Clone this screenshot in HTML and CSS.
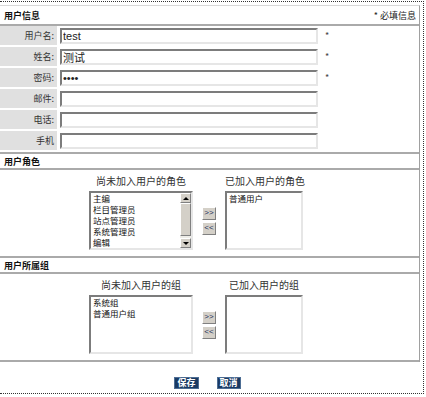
FILE: index.html
```html
<!DOCTYPE html>
<html>
<head>
  <meta charset="utf-8">
  <link rel="stylesheet" href="styles.css">
</head>
<body>
  <div class="frame">
    <div class="panel">
      <div class="sec-head first"><span>用户信息</span><span class="req">* 必填信息</span></div>
      <div class="fields">
        <div class="row"><div class="lab">用户名:</div><div class="val"><input class="txt" type="text" value="test"><span class="star">*</span></div></div>
        <div class="row"><div class="lab">姓名:</div><div class="val"><input class="txt" type="text" value="测试"><span class="star">*</span></div></div>
        <div class="row"><div class="lab">密码:</div><div class="val"><input class="txt" type="password" value="1234"><span class="star">*</span></div></div>
        <div class="row"><div class="lab">邮件:</div><div class="val"><input class="txt" type="text" value=""></div></div>
        <div class="row"><div class="lab">电话:</div><div class="val"><input class="txt" type="text" value=""></div></div>
        <div class="row"><div class="lab">手机</div><div class="val"><input class="txt" type="text" value=""></div></div>
      </div>

      <div class="sec-head"><span>用户角色</span></div>
      <div class="picker">
        <div class="col-title">尚未加入用户的角色</div>
        <div></div>
        <div class="col-title">已加入用户的角色</div>
        <div class="list">
          <div class="items">
            <div>主编</div>
            <div>栏目管理员</div>
            <div>站点管理员</div>
            <div>系统管理员</div>
            <div>编辑</div>
          </div>
          <div class="scroll">
            <div class="sb-btn"><span class="tri up"></span></div>
            <div class="sb-thumb"></div>
            <div class="sb-track"></div>
            <div class="sb-btn"><span class="tri down"></span></div>
          </div>
        </div>
        <div class="moves">
          <button type="button" class="mv">&gt;&gt;</button>
          <button type="button" class="mv">&lt;&lt;</button>
        </div>
        <div class="list">
          <div class="items">
            <div>普通用户</div>
          </div>
        </div>
      </div>

      <div class="sec-head"><span>用户所属组</span></div>
      <div class="picker">
        <div class="col-title">尚未加入用户的组</div>
        <div></div>
        <div class="col-title">已加入用户的组</div>
        <div class="list">
          <div class="items">
            <div>系统组</div>
            <div>普通用户组</div>
          </div>
        </div>
        <div class="moves">
          <button type="button" class="mv">&gt;&gt;</button>
          <button type="button" class="mv">&lt;&lt;</button>
        </div>
        <div class="list">
          <div class="items"></div>
        </div>
      </div>
    </div>

    <div class="actions">
      <button type="button" class="btn">保存</button>
      <button type="button" class="btn">取消</button>
    </div>
  </div>
</body>
</html>
```

FILE: styles.css
```css
body {
  margin: 0;
  background: #fff;
  color: #222;
  font-family: "Noto Sans CJK SC", "Liberation Sans", sans-serif;
  font-size: 9px;
}

.frame {
  width: 424px;
  box-sizing: border-box;
  margin-top: 1px;
  border: 1px dotted #333;
  border-left: none;
  padding-top: 3px;
  padding-bottom: 4px;
}

.panel {
  width: 420px;
  box-sizing: border-box;
  border-top: 1px solid #d8d8d8;
  border-right: 1px solid #a0a0a0;
}

.sec-head {
  display: flex;
  justify-content: space-between;
  align-items: center;
  height: 14px;
  padding: 0 3px 0 4px;
  border-bottom: 2px solid #aaa;
  font-weight: bold;
  color: #111;
}

.sec-head.first {
  height: 18px;
}

.req {
  font-weight: normal;
  color: #222;
}

.fields {
  display: grid;
  row-gap: 2px;
  padding-bottom: 2px;
  border-bottom: 2px solid #aaa;
}

.row {
  display: grid;
  grid-template-columns: 57px auto;
  column-gap: 3px;
  height: 19px;
}

.lab {
  display: flex;
  align-items: center;
  justify-content: flex-end;
  padding-right: 3px;
  background: #e0e0e0;
  color: #333;
}

.val {
  display: flex;
  align-items: center;
}

.txt {
  width: 258px;
  height: 16px;
  box-sizing: border-box;
  margin: 0;
  padding: 0 1px;
  border: 2px solid;
  border-color: #7c7c7c #e6e6e6 #e6e6e6 #7c7c7c;
  outline: none;
  font-family: "Liberation Sans", "Noto Sans CJK SC", sans-serif;
  font-size: 11px;
  color: #222;
}

.star {
  margin-left: 7px;
  color: #444;
}

.picker {
  display: grid;
  grid-template-columns: 104px 32px 78px;
  grid-template-rows: 12px 59px;
  row-gap: 4px;
  padding: 5px 0 6px 89px;
  border-bottom: 2px solid #aaa;
}

.col-title {
  text-align: center;
  white-space: nowrap;
  font-size: 10px;
  line-height: 12px;
  color: #333;
}

.list {
  display: flex;
  box-sizing: border-box;
  border: 2px solid;
  border-color: #7c7c7c #e6e6e6 #e6e6e6 #7c7c7c;
  background: #fff;
}

.items {
  flex: 1;
  padding: 0 2px;
  font-size: 8.5px;
  line-height: 11px;
  color: #111;
}

.scroll {
  display: flex;
  flex-direction: column;
  width: 11px;
  background: #eeede8;
}

.sb-btn {
  display: flex;
  align-items: center;
  justify-content: center;
  height: 10px;
  box-sizing: border-box;
  background: #d4d0c8;
  border: 1px solid;
  border-color: #fff #808080 #808080 #fff;
}

.sb-thumb {
  height: 33px;
  box-sizing: border-box;
  background: #d4d0c8;
  border: 1px solid;
  border-color: #fff #808080 #808080 #fff;
}

.sb-track {
  flex: 1;
}

.tri {
  width: 0;
  height: 0;
  border-left: 3px solid transparent;
  border-right: 3px solid transparent;
}

.tri.up {
  border-bottom: 3px solid #000;
}

.tri.down {
  border-top: 3px solid #000;
}

.moves {
  display: flex;
  flex-direction: column;
  align-items: center;
  justify-content: center;
  gap: 2px;
}

.mv {
  width: 14px;
  height: 13px;
  box-sizing: border-box;
  margin: 0;
  padding: 0;
  background: #d4d0c8;
  border: 1px solid;
  border-color: #fff #808080 #808080 #fff;
  color: #1c2f5a;
  font-family: "Liberation Sans", sans-serif;
  font-size: 8px;
  line-height: 10px;
}

.actions {
  display: flex;
  justify-content: center;
  gap: 18px;
  margin-top: 15px;
  padding-right: 8px;
}

.btn {
  height: 12px;
  box-sizing: border-box;
  margin: 0;
  padding: 0 2px;
  background: #1a3a63;
  border: 1px solid #4d6d94;
  color: #fff;
  font-family: "Noto Sans CJK SC", sans-serif;
  font-size: 9px;
  font-weight: bold;
  line-height: 10px;
}
```
